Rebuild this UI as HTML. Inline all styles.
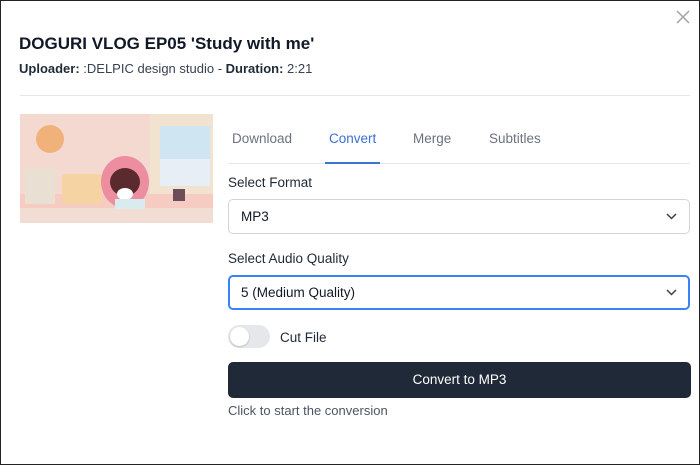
<!DOCTYPE html>
<html><head><style>
*{box-sizing:border-box;margin:0;padding:0}
body{width:700px;height:465px;background:#fff;font-family:"Liberation Sans",Arial,sans-serif;color:#111827;position:relative;overflow:hidden}
.a{position:absolute}
h1{position:absolute;left:19px;top:34px;font-size:17px;font-weight:bold;color:#111827}
.sub{left:19px;top:61px;font-size:13px;color:#374151}
.sub b{color:#1f2937}
.hr{left:20px;top:95px;width:670px;height:1px;background:#e5e7eb}
.tab{top:131px;font-size:13.5px;color:#6b7280}
.lbl{font-size:13.5px;color:#1f2937}
.sel{left:228px;width:462px;height:35px;border:1px solid #d1d5db;border-radius:5px;font-size:13.5px;padding:9px 12px;color:#111827}
.sel svg{position:absolute;right:12px;top:13px}
</style></head><body>
<h1>DOGURI VLOG EP05 'Study with me'</h1>
<div class="a sub"><b>Uploader:</b> :DELPIC design studio - <b>Duration:</b> 2:21</div>
<div class="a" style="left:676px;top:10px"><svg width="14" height="14" viewBox="0 0 14 14"><path d="M1 1L13 13M13 1L1 13" stroke="#9ca3af" stroke-width="1.5"/></svg></div>
<div class="a hr"></div>
<svg class="a" style="left:20px;top:114px" width="193" height="109" viewBox="0 0 193 109">
<rect width="193" height="109" fill="#f3d9d0"/>
<rect x="130" y="0" width="63" height="85" fill="#f1e3cf"/>
<rect x="140" y="12" width="50" height="60" fill="#cfe6f2"/>
<rect x="140" y="45" width="50" height="27" fill="#e8eef5"/>
<rect x="0" y="80" width="193" height="29" fill="#f6ccc2"/>
<rect x="0" y="94" width="193" height="15" fill="#f2ddd5"/>
<circle cx="30" cy="25" r="14" fill="#f0b27a"/>
<rect x="42" y="60" width="40" height="30" rx="3" fill="#f6d3a3"/>
<rect x="5" y="55" width="30" height="35" fill="#e9e0d3"/>
<ellipse cx="105" cy="68" rx="24" ry="26" fill="#ec8ea0"/>
<ellipse cx="105" cy="68" rx="15" ry="14" fill="#5a2a2e"/>
<ellipse cx="105" cy="80" rx="8" ry="6" fill="#fff"/>
<rect x="95" y="85" width="30" height="10" fill="#d8ecef"/>
<rect x="153" y="75" width="12" height="12" fill="#6b4e5a"/>
</svg>
<div class="a tab" style="left:232px">Download</div>
<div class="a tab" style="left:329px;color:#3b6fd4">Convert</div>
<div class="a tab" style="left:413px">Merge</div>
<div class="a tab" style="left:489px">Subtitles</div>
<div class="a" style="left:228px;top:163px;width:462px;height:1px;background:#e5e7eb"></div>
<div class="a" style="left:325px;top:162px;width:55px;height:2px;background:#3b76d4"></div>
<div class="a lbl" style="left:228px;top:175px">Select Format</div>
<div class="a sel" style="top:199px">MP3<svg width="11" height="7" viewBox="0 0 11 7"><path d="M1 1l4.5 4.5L10 1" fill="none" stroke="#374151" stroke-width="1.5"/></svg></div>
<div class="a lbl" style="left:228px;top:251px">Select Audio Quality</div>
<div class="a sel" style="top:275px;border:2px solid #3b82f6;padding:8px 11px">5 (Medium Quality)<svg width="11" height="7" viewBox="0 0 11 7" style="right:11px;top:12px"><path d="M1 1l4.5 4.5L10 1" fill="none" stroke="#374151" stroke-width="1.5"/></svg></div>
<div class="a" style="left:228px;top:325px;width:42px;height:23px;border-radius:12px;background:#e5e7eb"><div style="position:absolute;left:2px;top:2px;width:19px;height:19px;border-radius:50%;background:#fff;box-shadow:0 1px 2px rgba(0,0,0,.2)"></div></div>
<div class="a lbl" style="left:280px;top:330px">Cut File</div>
<div class="a" style="left:228px;top:362px;width:463px;height:36px;background:#1f2937;border-radius:5px;color:#fff;font-size:13.5px;text-align:center;line-height:36px">Convert to MP3</div>
<div class="a" style="left:228px;top:403px;font-size:13px;color:#4b5563">Click to start the conversion</div>
<div class="a" style="left:0;top:0;width:700px;height:465px;border:1px solid #222;pointer-events:none"></div>
</body></html>
